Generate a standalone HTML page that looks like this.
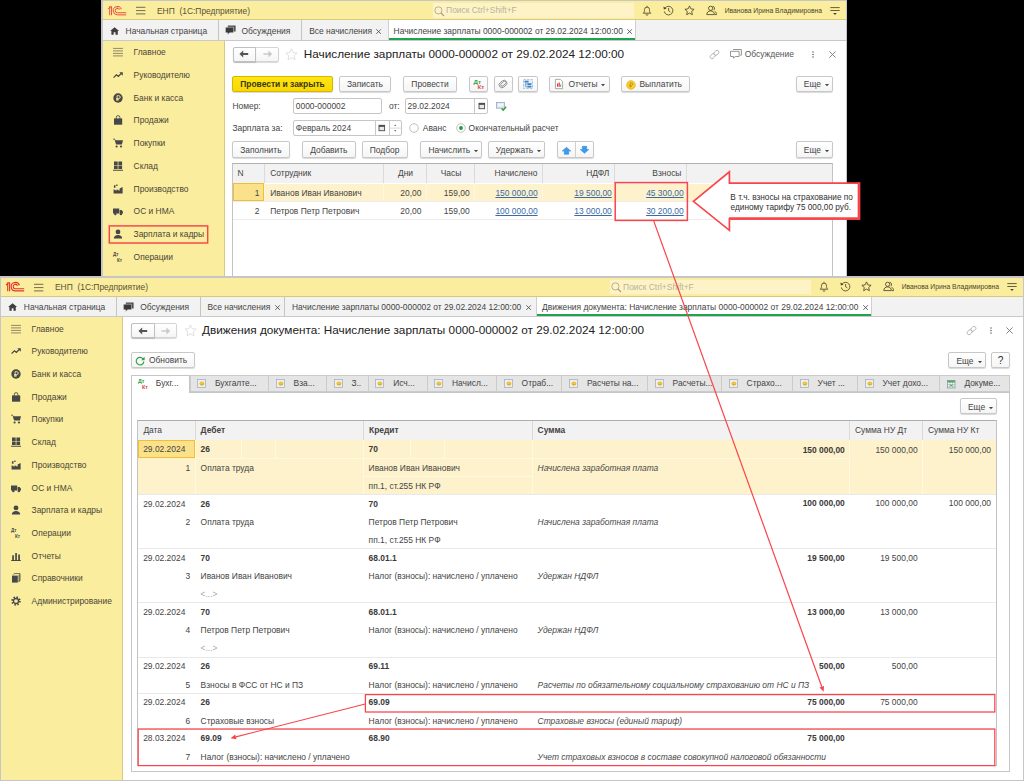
<!DOCTYPE html>
<html><head><meta charset="utf-8"><title>1C</title><style>
html,body{margin:0;padding:0;background:#000;}
body{width:1024px;height:781px;position:relative;overflow:hidden;font-family:"Liberation Sans",sans-serif;font-size:8.43px;color:#444;}
.a{position:absolute;}
.t{position:absolute;white-space:pre;line-height:12px;height:12px;}
.btn{box-sizing:border-box;border:1px solid #c8c8c8;border-radius:2px;background:linear-gradient(#ffffff,#f5f5f5);box-shadow:0 1px 1px rgba(0,0,0,0.15);}
.ybtn{background:linear-gradient(#ffe614,#f9d802);border-color:#d8b600;}
.inp{box-sizing:border-box;border:1px solid #c6c6c6;border-radius:2px;background:#fff;}
svg{overflow:visible;}
</style></head><body>
<div class="a" style="left:101.10px;top:-0.30px;width:746.10px;height:290.30px;background:#c6c6c8;"></div><div class="a" style="left:102.80px;top:1.20px;width:743.00px;height:287.40px;background:#fff;"></div><div class="a" style="left:102.80px;top:1.20px;width:743.00px;height:19.20px;background:#fbed9e;border-bottom:1px solid #d9c97e;box-sizing:border-box;"></div><svg class="a" style="left:108.00px;top:5.75px" width="18.5" height="9.6" viewBox="0 0 18.5 9.6"><path d="M0.1 3.1L1.6 1.3M1.7 0.6V9.25M3.55 0.6V9.25M1.3 0.95H3.95" stroke="#e2362f" stroke-width="0.85" fill="none"/><path d="M13.35 3.2A4.2 4.2 0 1 0 9.4 8.85H18.2" stroke="#e2362f" stroke-width="0.85" fill="none"/><path d="M11.4 3.9A2.15 2.15 0 1 0 9.4 6.75H18.2" stroke="#e2362f" stroke-width="0.85" fill="none"/><path d="M12.3 3.5A3.15 3.15 0 0 0 7.4 2.2" stroke="#e2362f" stroke-width="0.5" fill="none" opacity="0.7"/></svg><svg class="a" style="left:136.20px;top:6.20px" width="10" height="10" viewBox="0 0 10 10"><path d="M0 1.3h9.4M0 4.6h9.4M0 7.9h9.4" stroke="#6d6548" stroke-width="0.95"/></svg><span class="t" style="top:5.00px;left:157.00px;color:#5a5236;">ЕНП  (1С:Предприятие)</span><div class="a" style="left:432.70px;top:3.20px;width:201.30px;height:14.80px;background:#fdf3c6;"></div><svg class="a" style="left:434.30px;top:5.60px" width="11" height="11" viewBox="0 0 11 11"><circle cx="4.4" cy="4.4" r="3.6" fill="none" stroke="#a79f80" stroke-width="0.8"/><path d="M7 7l3 3" stroke="#a79f80" stroke-width="1.1"/></svg><span class="t" style="top:4.20px;left:446.10px;color:#b9b397;">Поиск Ctrl+Shift+F</span><svg class="a" style="left:641.90px;top:5.00px" width="10" height="11" viewBox="0 0 10 11"><path d="M1.2 8.2c1.2-0.9 1.3-2 1.3-3.6a2.5 2.5 0 0 1 5 0c0 1.6 0.1 2.7 1.3 3.6z" fill="none" stroke="#4b442c" stroke-width="0.85" stroke-linejoin="round"/><path d="M4 9.3a1 1 0 0 0 2 0" fill="none" stroke="#4b442c" stroke-width="0.8"/><path d="M5 0.8v1.2" stroke="#4b442c" stroke-width="0.8"/></svg><svg class="a" style="left:663.20px;top:5.00px" width="11" height="11" viewBox="0 0 11 11"><path d="M2 3.2A4.3 4.3 0 1 1 1.3 6.4" fill="none" stroke="#4b442c" stroke-width="0.85"/><path d="M0.4 1.6l0.5 2.9 2.7-0.9z" fill="#4b442c"/><path d="M5.6 3v2.7l1.8 1.2" fill="none" stroke="#4b442c" stroke-width="0.85"/></svg><svg class="a" style="left:684.40px;top:5.00px" width="11" height="11" viewBox="0 0 11 11"><path d="M5.5 0.9l1.4 3 3.2 0.4-2.4 2.2 0.65 3.2L5.5 8.1 2.65 9.7l0.65-3.2L0.9 4.3l3.2-0.4z" fill="none" stroke="#4b442c" stroke-width="0.85" stroke-linejoin="round"/></svg><svg class="a" style="left:705.70px;top:5.00px" width="11" height="11" viewBox="0 0 11 11"><circle cx="4.6" cy="3.3" r="2.1" fill="none" stroke="#4b442c" stroke-width="0.85"/><path d="M0.8 9.6c0-2.4 1.6-3.7 3.8-3.7s3.8 1.3 3.8 3.7z" fill="none" stroke="#4b442c" stroke-width="0.85"/><path d="M6.6 1.3a2.1 2.1 0 0 1 0.9 3.9M8.6 6.2c1.2 0.5 1.9 1.6 1.9 3.4H9" fill="none" stroke="#4b442c" stroke-width="0.85"/></svg><span class="t" style="top:4.70px;left:822.00px;transform:translateX(-100%);font-size:6.75px;color:#4b442c;">Иванова Ирина Владимировна</span><svg class="a" style="left:829.90px;top:5.50px" width="10" height="10" viewBox="0 0 10 10"><path d="M0.3 1.6h9.4M0.3 4.5h9.4" stroke="#4b442c" stroke-width="0.85"/><path d="M3.2 7h3.6L5 9z" fill="#4b442c"/></svg><div class="a" style="left:102.80px;top:20.40px;width:743.00px;height:20.20px;background:#f2f2f2;border-bottom:1px solid #c9c9c9;box-sizing:border-box;"></div><div class="a" style="left:217.80px;top:20.40px;width:1.00px;height:19.60px;background:#c4c4c4;"></div><span class="t" style="top:24.80px;left:125.60px;">Начальная страница</span><svg class="a" style="left:109.80px;top:27.00px" width="9.2" height="7.8" viewBox="0 0 9.2 7.8"><path d="M4.6 0.2L0.1 4.1h1.3V7.7h2.3V5.2h1.8V7.7h2.3V4.1h1.3z" fill="#3e3e3e"/></svg><div class="a" style="left:300.90px;top:20.40px;width:1.00px;height:19.60px;background:#c4c4c4;"></div><span class="t" style="top:24.80px;left:241.40px;">Обсуждения</span><svg class="a" style="left:225.10px;top:25.20px" width="11" height="10" viewBox="0 0 11 10"><path d="M2.8 0.5h7.8v6H2.8z" fill="#4d4d4d"/><path d="M0.4 2.2h8.2v5.6H4.6L2.6 9.8V7.8H0.4z" fill="#3a3a3a" stroke="#f2f2f2" stroke-width="0.5"/></svg><span class="t" style="top:24.80px;left:309.20px;">Все начисления</span><svg class="a" style="left:376.20px;top:28.50px" width="5.2" height="5.2" viewBox="0 0 5.2 5.2"><path d="M0.3 0.3l4.6 4.6M4.9 0.3L0.3 4.9" stroke="#4a4a4a" stroke-width="0.85"/></svg><div class="a" style="left:387.60px;top:20.40px;width:248.20px;height:19.30px;background:#fff;border-left:1px solid #cfcfcf;border-right:1px solid #cfcfcf;box-sizing:border-box;"></div><div class="a" style="left:388.60px;top:37.50px;width:246.20px;height:2.00px;background:#1fa350;"></div><span class="t" style="top:24.80px;left:393.60px;">Начисление зарплаты 0000-000002 от 29.02.2024 12:00:00</span><svg class="a" style="left:627.20px;top:28.50px" width="5.2" height="5.2" viewBox="0 0 5.2 5.2"><path d="M0.3 0.3l4.6 4.6M4.9 0.3L0.3 4.9" stroke="#4a4a4a" stroke-width="0.85"/></svg><div class="a" style="left:102.80px;top:40.60px;width:122.00px;height:248.00px;background:#fbed9e;border-right:1px solid #d8c880;box-sizing:border-box;"></div><svg class="a" style="left:113.30px;top:47.20px" width="10" height="10" viewBox="0 0 10 10"><path d="M0 1.4h10M0 3.9h10M0 6.4h10M0 8.9h10" stroke="#6f6852" stroke-width="0.75"/></svg><span class="t" style="top:46.20px;left:133.60px;color:#4a4636;">Главное</span><svg class="a" style="left:113.30px;top:69.92px" width="10" height="10" viewBox="0 0 10 10"><path d="M0.6 7.6L3.4 4.8L5.4 6.3L8.4 3.4" stroke="#474747" stroke-width="1.3" fill="none"/><path d="M6.3 2.2h3.5v3.5z" fill="#474747"/></svg><span class="t" style="top:68.92px;left:133.60px;color:#4a4636;">Руководителю</span><svg class="a" style="left:113.30px;top:92.64px" width="10" height="10" viewBox="0 0 10 10"><circle cx="5" cy="5" r="4.7" fill="#474747"/><path d="M4.1 7.9V2.7h1.7a1.45 1.45 0 0 1 0 2.9H3.1M3.1 6.8h2.9" stroke="#fbed9e" stroke-width="0.9" fill="none"/></svg><span class="t" style="top:91.64px;left:133.60px;color:#4a4636;">Банк и касса</span><svg class="a" style="left:113.30px;top:115.36px" width="10" height="10" viewBox="0 0 10 10"><path d="M1 3.4h8.2v6.3H1z" fill="#474747"/><path d="M3.3 4V2.4a1.8 1.8 0 0 1 3.6 0V4" stroke="#474747" fill="none" stroke-width="0.9"/></svg><span class="t" style="top:114.36px;left:133.60px;color:#4a4636;">Продажи</span><svg class="a" style="left:113.30px;top:138.08px" width="10" height="10" viewBox="0 0 10 10"><path d="M0 0.8h1.9l.5 1.4H10L8.9 6.6H3.1L1.5 1.6H0z" fill="#474747"/><circle cx="3.6" cy="8.5" r="1.1" fill="#474747"/><circle cx="8" cy="8.5" r="1.1" fill="#474747"/></svg><span class="t" style="top:137.08px;left:133.60px;color:#4a4636;">Покупки</span><svg class="a" style="left:113.30px;top:160.80px" width="10" height="10" viewBox="0 0 10 10"><path d="M1 0.6h3.7v3.3H1zM5.4 0.6h3.7v3.3H5.4zM1 4.6h3.7v3.3H1zM5.4 4.6h3.7v3.3H5.4zM0 8.7h10v1H0z" fill="#474747"/></svg><span class="t" style="top:159.80px;left:133.60px;color:#4a4636;">Склад</span><svg class="a" style="left:113.30px;top:183.52px" width="10" height="10" viewBox="0 0 10 10"><path d="M0.6 9.6V5.2l3 1.6V5.2l3 1.6V4.6l3-1.6v6.6z" fill="#474747"/><path d="M0.9 1.2h1.6v2.6H0.9zM3.2 0.4h1.3v1.6H3.2z" fill="#474747"/></svg><span class="t" style="top:182.52px;left:133.60px;color:#4a4636;">Производство</span><svg class="a" style="left:113.30px;top:206.24px" width="10" height="10" viewBox="0 0 10 10"><path d="M0 2.4h6.2v5.2H0zM6.7 3.9h1.9l1.4 1.8v1.9H6.7z" fill="#474747"/><circle cx="2.3" cy="8" r="1.25" fill="#474747"/><circle cx="7.9" cy="8" r="1.25" fill="#474747"/></svg><span class="t" style="top:205.24px;left:133.60px;color:#4a4636;">ОС и НМА</span><svg class="a" style="left:113.30px;top:228.96px" width="10" height="10" viewBox="0 0 10 10"><circle cx="5" cy="2.9" r="2.4" fill="#474747"/><path d="M0.8 9.6c0-2.6 1.8-3.7 4.2-3.7s4.2 1.1 4.2 3.7z" fill="#474747"/></svg><span class="t" style="top:227.96px;left:133.60px;color:#4a4636;">Зарплата и кадры</span><svg class="a" style="left:113.30px;top:251.68px" width="10" height="10" viewBox="0 0 10 10"><text x="0" y="4.2" font-family="Liberation Sans" font-size="4.6" font-weight="700" fill="#474747">Дт</text><text x="4" y="9.6" font-family="Liberation Sans" font-size="4.6" font-weight="700" fill="#474747">Кт</text></svg><span class="t" style="top:250.68px;left:133.60px;color:#4a4636;">Операции</span><svg class="a" style="left:113.30px;top:274.40px" width="10" height="10" viewBox="0 0 10 10"><path d="M1.2 9V4.2h1.7V9zM4.2 9V2h1.7v7zM7.2 9V3.4h1.7V9zM0.2 9h9.6v.9H0.2z" fill="#474747"/></svg><span class="t" style="top:273.40px;left:133.60px;color:#4a4636;">Отчеты</span><div class="a btn" style="left:232.60px;top:46.70px;width:46.20px;height:14.90px;border-color:#d4d4d4;"></div><div class="a btn" style="left:232.60px;top:46.70px;width:23.30px;height:14.90px;border-radius:2px 0 0 2px;border-color:#c0c0c0;"></div><svg class="a" style="left:239.40px;top:50.10px" width="10" height="8" viewBox="0 0 10 8"><path d="M0.4 4L4.2 0.6V3.1H9.2V4.9H4.2V7.4z" fill="#555"/></svg><svg class="a" style="left:262.50px;top:50.10px" width="10" height="8" viewBox="0 0 10 8"><path d="M9.2 4L5.4 0.6V3.2H0.4V4.8H5.4V7.4z" fill="#c9c9c9"/></svg><svg class="a" style="left:285.40px;top:47.90px" width="13" height="13" viewBox="0 0 13 13"><path d="M6.5 0.9l1.7 3.7 3.9 0.5-2.9 2.7 0.8 3.9L6.5 9.8 3 11.7l0.8-3.9L0.9 5.1l3.9-0.5z" fill="#fff" stroke="#dcdcdc" stroke-width="0.9" stroke-linejoin="round"/></svg><span class="t" style="top:48.20px;left:303.80px;font-size:11.78px;color:#222;line-height:14px;margin-top:-1px;">Начисление зарплаты 0000-000002 от 29.02.2024 12:00:00</span><svg class="a" style="left:709.00px;top:48.90px" width="11" height="11" viewBox="0 0 11 11"><g transform="rotate(-42 5.5 5.5)" fill="none" stroke="#a6a6a6" stroke-width="0.75"><rect x="0.2" y="3.6" width="5.6" height="3.8" rx="1.9"/><rect x="5.2" y="3.6" width="5.6" height="3.8" rx="1.9"/></g></svg><svg class="a" style="left:730.20px;top:49.40px" width="12" height="10" viewBox="0 0 12 10"><path d="M3 0.5h8.4v5.6H10" fill="none" stroke="#7c7c7c" stroke-width="0.8"/><path d="M0.5 2.3h8.6v5.2H5.2L3.6 9.3V7.5H0.5z" fill="#fff" stroke="#7c7c7c" stroke-width="0.8"/></svg><span class="t" style="top:48.20px;left:744.80px;color:#555;">Обсуждение</span><svg class="a" style="left:812.30px;top:50.80px" width="2" height="7" viewBox="0 0 2 7"><circle cx="1" cy="1" r="0.68" fill="#4a4a4a"/><circle cx="1" cy="3.5" r="0.68" fill="#4a4a4a"/><circle cx="1" cy="6" r="0.68" fill="#4a4a4a"/></svg><svg class="a" style="left:828.70px;top:50.80px" width="7" height="7" viewBox="0 0 7 7"><path d="M0.4 0.4l6.2 6.2M6.6 0.4L0.4 6.6" stroke="#707070" stroke-width="0.85"/></svg><div class="a btn ybtn" style="left:232.20px;top:75.80px;width:100.60px;height:16.20px;"></div><span class="t" style="top:78.10px;left:282.50px;transform:translateX(-50%);color:#3b3612;font-weight:700;">Провести и закрыть</span><div class="a btn " style="left:339.00px;top:75.80px;width:51.80px;height:16.20px;"></div><span class="t" style="top:78.10px;left:364.90px;transform:translateX(-50%);">Записать</span><div class="a btn " style="left:403.20px;top:75.80px;width:53.60px;height:16.20px;"></div><span class="t" style="top:78.10px;left:430.00px;transform:translateX(-50%);">Провести</span><div class="a btn " style="left:469.30px;top:75.80px;width:18.90px;height:16.20px;"></div><span class="t" style="top:75.90px;left:473.60px;font-size:6.2px;color:#2f9e44;font-weight:700;">Дт</span><span class="t" style="top:81.20px;left:477.40px;font-size:6.2px;color:#e8474b;font-weight:700;">Кт</span><div class="a btn " style="left:494.00px;top:75.80px;width:18.80px;height:16.20px;"></div><svg class="a" style="left:498.40px;top:79.20px" width="10" height="10" viewBox="0 0 10 10"><g transform="rotate(-40 5 5)" fill="none" stroke="#8c8c8c" stroke-width="0.9"><rect x="0.8" y="2.2" width="8.4" height="5.6" rx="2.8"/><rect x="2.4" y="3.6" width="6.2" height="2.8" rx="1.4"/></g></svg><div class="a btn " style="left:518.40px;top:75.80px;width:19.30px;height:16.20px;"></div><svg class="a" style="left:523.20px;top:79.00px" width="10" height="10" viewBox="0 0 10 10"><rect x="0.5" y="0.6" width="9" height="8.8" fill="#e6f0fa" stroke="#5b8cc4" stroke-width="0.5" stroke-dasharray="2.4 1.2"/><path d="M1.6 1.8h4v1.8h-4zM4.4 4.2h4V6h-4zM4.4 6.8h4v1.8h-4z" fill="#3f7dc0"/><path d="M2.6 3.6v4.1h1.8M2.6 5.1h1.8" fill="none" stroke="#3f7dc0" stroke-width="0.6"/></svg><div class="a btn " style="left:549.30px;top:75.80px;width:60.30px;height:16.20px;"></div><svg class="a" style="left:555.40px;top:79.20px" width="8" height="10" viewBox="0 0 8 10"><path d="M0.4 0.4h5l2.2 2.2v7H0.4z" fill="#fff" stroke="#8a8a8a" stroke-width="0.7"/><path d="M2 7.8V4.6h1.2v3.2z" fill="#e03b3b"/><path d="M3.6 7.8V3.4h1.2v4.4z" fill="#e03b3b"/><path d="M5.2 7.8V5.4h1v2.4z" fill="#39a845"/></svg><span class="t" style="top:78.10px;left:568.40px;">Отчеты</span><svg class="a" style="left:601.20px;top:84.20px" width="4" height="2.4" viewBox="0 0 4 2.4"><path d="M0 0h4L2 2.3z" fill="#444"/></svg><div class="a btn " style="left:621.30px;top:75.80px;width:68.70px;height:16.20px;"></div><svg class="a" style="left:625.90px;top:79.70px" width="10" height="10" viewBox="0 0 10 10"><circle cx="5" cy="5" r="4.3" fill="#f9cf2e" stroke="#e0ad18" stroke-width="0.7"/><path d="M4.2 7.6V2.8h1.3a1.2 1.2 0 0 1 0 2.4H3.4M3.4 6.4h2.4" stroke="#b8860b" stroke-width="0.7" fill="none"/></svg><span class="t" style="top:78.10px;left:639.50px;">Выплатить</span><div class="a btn " style="left:795.80px;top:75.80px;width:37.00px;height:16.20px;"></div><span class="t" style="top:78.10px;left:803.80px;">Еще</span><svg class="a" style="left:824.80px;top:84.20px" width="4" height="2.4" viewBox="0 0 4 2.4"><path d="M0 0h4L2 2.3z" fill="#444"/></svg><span class="t" style="top:100.20px;left:232.40px;">Номер:</span><div class="a inp" style="left:293.40px;top:98.30px;width:89.00px;height:15.50px;"></div><span class="t" style="top:100.20px;left:295.80px;">0000-000002</span><span class="t" style="top:100.20px;left:389.00px;">от:</span><div class="a inp" style="left:405.20px;top:98.30px;width:83.10px;height:15.50px;"></div><span class="t" style="top:100.20px;left:407.60px;">29.02.2024</span><div class="a" style="left:474.40px;top:99.40px;width:0.80px;height:13.40px;background:#c8c8c8;"></div><svg class="a" style="left:477.80px;top:102.30px" width="8" height="8" viewBox="0 0 8 8"><rect x="1" y="1.3" width="5.6" height="5.4" fill="#e8e8e8" stroke="#4c4c4c" stroke-width="0.9"/><path d="M1 1.2h5.6v1.6H1z" fill="#444"/></svg><svg class="a" style="left:496.20px;top:102.00px" width="11" height="9" viewBox="0 0 11 9"><rect x="0.4" y="0.4" width="8.2" height="5.8" fill="#dfe7f0" stroke="#8aa0b8" stroke-width="0.7"/><path d="M1.8 2.2h5.4M1.8 3.8h5.4" stroke="#fff" stroke-width="0.8"/><path d="M5.6 6.4l1.6 1.7 3-3.3" fill="none" stroke="#2fa23c" stroke-width="1.4"/></svg><span class="t" style="top:121.80px;left:232.40px;">Зарплата за:</span><div class="a inp" style="left:293.40px;top:120.20px;width:109.00px;height:15.70px;"></div><span class="t" style="top:121.80px;left:295.80px;">Февраль 2024</span><div class="a" style="left:375.40px;top:120.90px;width:0.80px;height:14.30px;background:#c8c8c8;"></div><div class="a" style="left:388.60px;top:120.90px;width:0.80px;height:14.30px;background:#c8c8c8;"></div><svg class="a" style="left:378.40px;top:123.80px" width="8" height="8" viewBox="0 0 8 8"><rect x="1" y="1.3" width="5.6" height="5.4" fill="#e8e8e8" stroke="#4c4c4c" stroke-width="0.9"/><path d="M1 1.2h5.6v1.6H1z" fill="#444"/></svg><svg class="a" style="left:389.40px;top:122.90px" width="12" height="10" viewBox="0 0 12 10"><path d="M5 3.1h2.4L6.2 1.5z" fill="#777"/><path d="M0.2 5.1h11.8" stroke="#cfcfcf" stroke-width="0.8"/><path d="M5 7.1h2.4L6.2 8.7z" fill="#777"/></svg><svg class="a" style="left:409.20px;top:122.80px" width="10" height="10" viewBox="0 0 10 10"><circle cx="5" cy="5" r="4.3" fill="#fff" stroke="#b3b3b3" stroke-width="0.8"/></svg><span class="t" style="top:121.60px;left:422.80px;">Аванс</span><svg class="a" style="left:455.60px;top:122.80px" width="10" height="10" viewBox="0 0 10 10"><circle cx="5" cy="5" r="4.3" fill="#fff" stroke="#b3b3b3" stroke-width="0.8"/><circle cx="5" cy="5" r="1.9" fill="#18964a"/></svg><span class="t" style="top:121.80px;left:468.60px;">Окончательный расчет</span><div class="a btn " style="left:232.20px;top:141.40px;width:57.40px;height:16.20px;"></div><span class="t" style="top:143.70px;left:260.90px;transform:translateX(-50%);">Заполнить</span><div class="a btn " style="left:302.20px;top:141.40px;width:53.40px;height:16.20px;"></div><span class="t" style="top:143.70px;left:328.90px;transform:translateX(-50%);">Добавить</span><div class="a btn " style="left:361.60px;top:141.40px;width:46.00px;height:16.20px;"></div><span class="t" style="top:143.70px;left:384.60px;transform:translateX(-50%);">Подбор</span><div class="a btn " style="left:420.40px;top:141.40px;width:61.20px;height:16.20px;"></div><span class="t" style="top:143.70px;left:428.40px;">Начислить</span><svg class="a" style="left:473.80px;top:149.90px" width="4" height="2.4" viewBox="0 0 4 2.4"><path d="M0 0h4L2 2.3z" fill="#444"/></svg><div class="a btn " style="left:488.00px;top:141.40px;width:56.60px;height:16.20px;"></div><span class="t" style="top:143.70px;left:495.80px;">Удержать</span><svg class="a" style="left:537.00px;top:149.90px" width="4" height="2.4" viewBox="0 0 4 2.4"><path d="M0 0h4L2 2.3z" fill="#444"/></svg><div class="a btn " style="left:557.20px;top:141.40px;width:37.20px;height:16.20px;"></div><div class="a" style="left:575.40px;top:142.00px;width:0.80px;height:14.80px;background:#cfcfcf;"></div><svg class="a" style="left:561.80px;top:146.50px" width="9" height="7.6" viewBox="0 0 9 7.6"><path d="M4.5 0.3L8.8 4.1H6.7V7.3H2.3V4.1H0.2z" fill="#3a9cf0" stroke="#2a82d8" stroke-width="0.5"/></svg><svg class="a" style="left:580.00px;top:146.10px" width="9" height="7.6" viewBox="0 0 9 7.6"><path d="M4.5 7.3L8.8 3.5H6.7V0.3H2.3V3.5H0.2z" fill="#3a9cf0" stroke="#2a82d8" stroke-width="0.5"/></svg><div class="a btn " style="left:795.80px;top:141.40px;width:37.00px;height:16.20px;"></div><span class="t" style="top:143.70px;left:803.80px;">Еще</span><svg class="a" style="left:824.80px;top:149.90px" width="4" height="2.4" viewBox="0 0 4 2.4"><path d="M0 0h4L2 2.3z" fill="#444"/></svg><div class="a" style="left:232.20px;top:163.20px;width:600.60px;height:128.80px;border:1px solid #c3c3c3;border-top-color:#b0b0b0;box-sizing:border-box;background:#fff;"></div><div class="a" style="left:233.20px;top:164.20px;width:598.60px;height:19.00px;background:#f2f2f2;"></div><div class="a" style="left:263.60px;top:164.20px;width:0.80px;height:19.00px;background:#dadada;"></div><div class="a" style="left:382.80px;top:164.20px;width:0.80px;height:19.00px;background:#dadada;"></div><div class="a" style="left:425.60px;top:164.20px;width:0.80px;height:19.00px;background:#dadada;"></div><div class="a" style="left:473.80px;top:164.20px;width:0.80px;height:19.00px;background:#dadada;"></div><div class="a" style="left:542.00px;top:164.20px;width:0.80px;height:19.00px;background:#dadada;"></div><div class="a" style="left:614.00px;top:164.20px;width:0.80px;height:19.00px;background:#dadada;"></div><div class="a" style="left:686.00px;top:164.20px;width:0.80px;height:19.00px;background:#dadada;"></div><div class="a" style="left:233.20px;top:183.60px;width:598.60px;height:17.60px;background:#fdf2cb;"></div><div class="a" style="left:263.60px;top:183.40px;width:0.80px;height:17.80px;background:#fff8dc;"></div><div class="a" style="left:382.80px;top:183.40px;width:0.80px;height:17.80px;background:#fff8dc;"></div><div class="a" style="left:425.60px;top:183.40px;width:0.80px;height:17.80px;background:#fff8dc;"></div><div class="a" style="left:473.80px;top:183.40px;width:0.80px;height:17.80px;background:#fff8dc;"></div><div class="a" style="left:542.00px;top:183.40px;width:0.80px;height:17.80px;background:#fff8dc;"></div><div class="a" style="left:614.00px;top:183.40px;width:0.80px;height:17.80px;background:#fff8dc;"></div><div class="a" style="left:686.00px;top:183.40px;width:0.80px;height:17.80px;background:#fff8dc;"></div><div class="a" style="left:233.20px;top:201.20px;width:598.60px;height:0.80px;background:#ececec;"></div><div class="a" style="left:233.20px;top:219.20px;width:598.60px;height:0.80px;background:#ececec;"></div><div class="a" style="left:233.20px;top:183.40px;width:30.80px;height:18.00px;background:#fbe28a;border:1px solid #efbf38;box-sizing:border-box;"></div><span class="t" style="top:167.40px;left:237.60px;">N</span><span class="t" style="top:167.40px;left:270.20px;">Сотрудник</span><span class="t" style="top:167.40px;left:413.00px;transform:translateX(-100%);">Дни</span><span class="t" style="top:167.40px;left:461.20px;transform:translateX(-100%);">Часы</span><span class="t" style="top:167.40px;left:537.40px;transform:translateX(-100%);">Начислено</span><span class="t" style="top:167.40px;left:609.40px;transform:translateX(-100%);">НДФЛ</span><span class="t" style="top:167.40px;left:681.40px;transform:translateX(-100%);">Взносы</span><span class="t" style="top:186.60px;left:259.40px;transform:translateX(-100%);">1</span><span class="t" style="top:186.60px;left:270.20px;">Иванов Иван Иванович</span><span class="t" style="top:186.60px;left:421.40px;transform:translateX(-100%);">20,00</span><span class="t" style="top:186.60px;left:469.60px;transform:translateX(-100%);">159,00</span><span class="t" style="top:186.60px;left:537.60px;transform:translateX(-100%);color:#3a6aa8;text-decoration:underline;">150 000,00</span><span class="t" style="top:186.60px;left:611.80px;transform:translateX(-100%);color:#3a6aa8;text-decoration:underline;">19 500,00</span><span class="t" style="top:186.60px;left:683.60px;transform:translateX(-100%);color:#3a6aa8;text-decoration:underline;">45 300,00</span><span class="t" style="top:205.00px;left:259.40px;transform:translateX(-100%);">2</span><span class="t" style="top:205.00px;left:270.20px;">Петров Петр Петрович</span><span class="t" style="top:205.00px;left:421.40px;transform:translateX(-100%);">20,00</span><span class="t" style="top:205.00px;left:469.60px;transform:translateX(-100%);">159,00</span><span class="t" style="top:205.00px;left:537.60px;transform:translateX(-100%);color:#3a6aa8;text-decoration:underline;">100 000,00</span><span class="t" style="top:205.00px;left:611.80px;transform:translateX(-100%);color:#3a6aa8;text-decoration:underline;">13 000,00</span><span class="t" style="top:205.00px;left:683.60px;transform:translateX(-100%);color:#3a6aa8;text-decoration:underline;">30 200,00</span>
<div class="a" style="left:-0.90px;top:276.00px;width:1025.10px;height:505.20px;background:#c6c6c8;"></div><div class="a" style="left:0.80px;top:277.50px;width:1022.00px;height:502.30px;background:#fff;"></div><div class="a" style="left:0.80px;top:277.50px;width:1022.00px;height:19.20px;background:#fbed9e;border-bottom:1px solid #d9c97e;box-sizing:border-box;"></div><svg class="a" style="left:6.00px;top:282.05px" width="18.5" height="9.6" viewBox="0 0 18.5 9.6"><path d="M0.1 3.1L1.6 1.3M1.7 0.6V9.25M3.55 0.6V9.25M1.3 0.95H3.95" stroke="#e2362f" stroke-width="1.15" fill="none"/><path d="M13.35 3.2A4.2 4.2 0 1 0 9.4 8.85H18.2" stroke="#e2362f" stroke-width="1.15" fill="none"/><path d="M11.4 3.9A2.15 2.15 0 1 0 9.4 6.75H18.2" stroke="#e2362f" stroke-width="1.15" fill="none"/><path d="M12.3 3.5A3.15 3.15 0 0 0 7.4 2.2" stroke="#e2362f" stroke-width="0.5" fill="none" opacity="0.7"/></svg><svg class="a" style="left:34.20px;top:282.50px" width="10" height="10" viewBox="0 0 10 10"><path d="M0 1.3h9.4M0 4.6h9.4M0 7.9h9.4" stroke="#6d6548" stroke-width="0.95"/></svg><span class="t" style="top:281.30px;left:55.00px;color:#5a5236;">ЕНП  (1С:Предприятие)</span><div class="a" style="left:609.70px;top:279.50px;width:201.30px;height:14.80px;background:#fdf3c6;"></div><svg class="a" style="left:611.30px;top:281.90px" width="11" height="11" viewBox="0 0 11 11"><circle cx="4.4" cy="4.4" r="3.6" fill="none" stroke="#a79f80" stroke-width="0.8"/><path d="M7 7l3 3" stroke="#a79f80" stroke-width="1.1"/></svg><span class="t" style="top:280.50px;left:623.10px;color:#b9b397;">Поиск Ctrl+Shift+F</span><svg class="a" style="left:818.90px;top:281.30px" width="10" height="11" viewBox="0 0 10 11"><path d="M1.2 8.2c1.2-0.9 1.3-2 1.3-3.6a2.5 2.5 0 0 1 5 0c0 1.6 0.1 2.7 1.3 3.6z" fill="none" stroke="#4b442c" stroke-width="0.85" stroke-linejoin="round"/><path d="M4 9.3a1 1 0 0 0 2 0" fill="none" stroke="#4b442c" stroke-width="0.8"/><path d="M5 0.8v1.2" stroke="#4b442c" stroke-width="0.8"/></svg><svg class="a" style="left:840.20px;top:281.30px" width="11" height="11" viewBox="0 0 11 11"><path d="M2 3.2A4.3 4.3 0 1 1 1.3 6.4" fill="none" stroke="#4b442c" stroke-width="0.85"/><path d="M0.4 1.6l0.5 2.9 2.7-0.9z" fill="#4b442c"/><path d="M5.6 3v2.7l1.8 1.2" fill="none" stroke="#4b442c" stroke-width="0.85"/></svg><svg class="a" style="left:861.40px;top:281.30px" width="11" height="11" viewBox="0 0 11 11"><path d="M5.5 0.9l1.4 3 3.2 0.4-2.4 2.2 0.65 3.2L5.5 8.1 2.65 9.7l0.65-3.2L0.9 4.3l3.2-0.4z" fill="none" stroke="#4b442c" stroke-width="0.85" stroke-linejoin="round"/></svg><svg class="a" style="left:882.70px;top:281.30px" width="11" height="11" viewBox="0 0 11 11"><circle cx="4.6" cy="3.3" r="2.1" fill="none" stroke="#4b442c" stroke-width="0.85"/><path d="M0.8 9.6c0-2.4 1.6-3.7 3.8-3.7s3.8 1.3 3.8 3.7z" fill="none" stroke="#4b442c" stroke-width="0.85"/><path d="M6.6 1.3a2.1 2.1 0 0 1 0.9 3.9M8.6 6.2c1.2 0.5 1.9 1.6 1.9 3.4H9" fill="none" stroke="#4b442c" stroke-width="0.85"/></svg><span class="t" style="top:281.00px;left:999.00px;transform:translateX(-100%);font-size:6.75px;color:#4b442c;">Иванова Ирина Владимировна</span><svg class="a" style="left:1006.90px;top:281.80px" width="10" height="10" viewBox="0 0 10 10"><path d="M0.3 1.6h9.4M0.3 4.5h9.4" stroke="#4b442c" stroke-width="0.85"/><path d="M3.2 7h3.6L5 9z" fill="#4b442c"/></svg><div class="a" style="left:0.80px;top:296.70px;width:1022.00px;height:20.20px;background:#f2f2f2;border-bottom:1px solid #c9c9c9;box-sizing:border-box;"></div><div class="a" style="left:116.10px;top:296.70px;width:1.00px;height:19.60px;background:#c4c4c4;"></div><span class="t" style="top:301.10px;left:23.80px;">Начальная страница</span><svg class="a" style="left:7.80px;top:303.30px" width="9.2" height="7.8" viewBox="0 0 9.2 7.8"><path d="M4.6 0.2L0.1 4.1h1.3V7.7h2.3V5.2h1.8V7.7h2.3V4.1h1.3z" fill="#3e3e3e"/></svg><div class="a" style="left:199.70px;top:296.70px;width:1.00px;height:19.60px;background:#c4c4c4;"></div><span class="t" style="top:301.10px;left:140.20px;">Обсуждения</span><svg class="a" style="left:123.40px;top:301.50px" width="11" height="10" viewBox="0 0 11 10"><path d="M2.8 0.5h7.8v6H2.8z" fill="#4d4d4d"/><path d="M0.4 2.2h8.2v5.6H4.6L2.6 9.8V7.8H0.4z" fill="#3a3a3a" stroke="#f2f2f2" stroke-width="0.5"/></svg><div class="a" style="left:283.90px;top:296.70px;width:1.00px;height:19.60px;background:#c4c4c4;"></div><span class="t" style="top:301.10px;left:207.40px;">Все начисления</span><svg class="a" style="left:275.00px;top:304.80px" width="5.2" height="5.2" viewBox="0 0 5.2 5.2"><path d="M0.3 0.3l4.6 4.6M4.9 0.3L0.3 4.9" stroke="#4a4a4a" stroke-width="0.85"/></svg><span class="t" style="top:301.10px;left:292.00px;">Начисление зарплаты 0000-000002 от 29.02.2024 12:00:00</span><svg class="a" style="left:525.60px;top:304.80px" width="5.2" height="5.2" viewBox="0 0 5.2 5.2"><path d="M0.3 0.3l4.6 4.6M4.9 0.3L0.3 4.9" stroke="#4a4a4a" stroke-width="0.85"/></svg><div class="a" style="left:535.60px;top:296.70px;width:336.20px;height:19.30px;background:#fff;border-left:1px solid #cfcfcf;border-right:1px solid #cfcfcf;box-sizing:border-box;"></div><div class="a" style="left:536.60px;top:313.80px;width:334.20px;height:2.00px;background:#1fa350;"></div><span class="t" style="top:301.10px;left:542.00px;">Движения документа: Начисление зарплаты 0000-000002 от 29.02.2024 12:00:00</span><svg class="a" style="left:862.60px;top:304.80px" width="5.2" height="5.2" viewBox="0 0 5.2 5.2"><path d="M0.3 0.3l4.6 4.6M4.9 0.3L0.3 4.9" stroke="#4a4a4a" stroke-width="0.85"/></svg><div class="a" style="left:0.80px;top:316.90px;width:122.00px;height:462.90px;background:#fbed9e;border-right:1px solid #d8c880;box-sizing:border-box;"></div><svg class="a" style="left:11.30px;top:323.50px" width="10" height="10" viewBox="0 0 10 10"><path d="M0 1.4h10M0 3.9h10M0 6.4h10M0 8.9h10" stroke="#6f6852" stroke-width="0.75"/></svg><span class="t" style="top:322.50px;left:31.60px;color:#4a4636;">Главное</span><svg class="a" style="left:11.30px;top:346.22px" width="10" height="10" viewBox="0 0 10 10"><path d="M0.6 7.6L3.4 4.8L5.4 6.3L8.4 3.4" stroke="#474747" stroke-width="1.3" fill="none"/><path d="M6.3 2.2h3.5v3.5z" fill="#474747"/></svg><span class="t" style="top:345.22px;left:31.60px;color:#4a4636;">Руководителю</span><svg class="a" style="left:11.30px;top:368.94px" width="10" height="10" viewBox="0 0 10 10"><circle cx="5" cy="5" r="4.7" fill="#474747"/><path d="M4.1 7.9V2.7h1.7a1.45 1.45 0 0 1 0 2.9H3.1M3.1 6.8h2.9" stroke="#fbed9e" stroke-width="0.9" fill="none"/></svg><span class="t" style="top:367.94px;left:31.60px;color:#4a4636;">Банк и касса</span><svg class="a" style="left:11.30px;top:391.66px" width="10" height="10" viewBox="0 0 10 10"><path d="M1 3.4h8.2v6.3H1z" fill="#474747"/><path d="M3.3 4V2.4a1.8 1.8 0 0 1 3.6 0V4" stroke="#474747" fill="none" stroke-width="0.9"/></svg><span class="t" style="top:390.66px;left:31.60px;color:#4a4636;">Продажи</span><svg class="a" style="left:11.30px;top:414.38px" width="10" height="10" viewBox="0 0 10 10"><path d="M0 0.8h1.9l.5 1.4H10L8.9 6.6H3.1L1.5 1.6H0z" fill="#474747"/><circle cx="3.6" cy="8.5" r="1.1" fill="#474747"/><circle cx="8" cy="8.5" r="1.1" fill="#474747"/></svg><span class="t" style="top:413.38px;left:31.60px;color:#4a4636;">Покупки</span><svg class="a" style="left:11.30px;top:437.10px" width="10" height="10" viewBox="0 0 10 10"><path d="M1 0.6h3.7v3.3H1zM5.4 0.6h3.7v3.3H5.4zM1 4.6h3.7v3.3H1zM5.4 4.6h3.7v3.3H5.4zM0 8.7h10v1H0z" fill="#474747"/></svg><span class="t" style="top:436.10px;left:31.60px;color:#4a4636;">Склад</span><svg class="a" style="left:11.30px;top:459.82px" width="10" height="10" viewBox="0 0 10 10"><path d="M0.6 9.6V5.2l3 1.6V5.2l3 1.6V4.6l3-1.6v6.6z" fill="#474747"/><path d="M0.9 1.2h1.6v2.6H0.9zM3.2 0.4h1.3v1.6H3.2z" fill="#474747"/></svg><span class="t" style="top:458.82px;left:31.60px;color:#4a4636;">Производство</span><svg class="a" style="left:11.30px;top:482.54px" width="10" height="10" viewBox="0 0 10 10"><path d="M0 2.4h6.2v5.2H0zM6.7 3.9h1.9l1.4 1.8v1.9H6.7z" fill="#474747"/><circle cx="2.3" cy="8" r="1.25" fill="#474747"/><circle cx="7.9" cy="8" r="1.25" fill="#474747"/></svg><span class="t" style="top:481.54px;left:31.60px;color:#4a4636;">ОС и НМА</span><svg class="a" style="left:11.30px;top:505.26px" width="10" height="10" viewBox="0 0 10 10"><circle cx="5" cy="2.9" r="2.4" fill="#474747"/><path d="M0.8 9.6c0-2.6 1.8-3.7 4.2-3.7s4.2 1.1 4.2 3.7z" fill="#474747"/></svg><span class="t" style="top:504.26px;left:31.60px;color:#4a4636;">Зарплата и кадры</span><svg class="a" style="left:11.30px;top:527.98px" width="10" height="10" viewBox="0 0 10 10"><text x="0" y="4.2" font-family="Liberation Sans" font-size="4.6" font-weight="700" fill="#474747">Дт</text><text x="4" y="9.6" font-family="Liberation Sans" font-size="4.6" font-weight="700" fill="#474747">Кт</text></svg><span class="t" style="top:526.98px;left:31.60px;color:#4a4636;">Операции</span><svg class="a" style="left:11.30px;top:550.70px" width="10" height="10" viewBox="0 0 10 10"><path d="M1.2 9V4.2h1.7V9zM4.2 9V2h1.7v7zM7.2 9V3.4h1.7V9zM0.2 9h9.6v.9H0.2z" fill="#474747"/></svg><span class="t" style="top:549.70px;left:31.60px;color:#4a4636;">Отчеты</span><svg class="a" style="left:11.30px;top:573.42px" width="10" height="10" viewBox="0 0 10 10"><path d="M1 2.6h5.8v7H1z" fill="#474747"/><path d="M2.2 1.6l1-1h5.8v7l-1.2 1.2" stroke="#474747" stroke-width="0.8" fill="none"/><path d="M7.6 2.6V9.2l1-1V1z" fill="#474747"/></svg><span class="t" style="top:572.42px;left:31.60px;color:#4a4636;">Справочники</span><svg class="a" style="left:11.30px;top:596.14px" width="10" height="10" viewBox="0 0 10 10"><circle cx="5" cy="5" r="3.7" fill="none" stroke="#474747" stroke-width="2" stroke-dasharray="1.45 1.456"/><circle cx="5" cy="5" r="2.5" fill="none" stroke="#474747" stroke-width="1.3"/></svg><span class="t" style="top:595.14px;left:31.60px;color:#4a4636;">Администрирование</span><div class="a btn" style="left:130.60px;top:323.20px;width:46.20px;height:14.90px;border-color:#d4d4d4;"></div><div class="a btn" style="left:130.60px;top:323.20px;width:24.60px;height:14.90px;border-radius:2px 0 0 2px;border-color:#c0c0c0;"></div><svg class="a" style="left:138.05px;top:326.60px" width="10" height="8" viewBox="0 0 10 8"><path d="M0.4 4L4.2 0.6V3.1H9.2V4.9H4.2V7.4z" fill="#555"/></svg><svg class="a" style="left:161.15px;top:326.60px" width="10" height="8" viewBox="0 0 10 8"><path d="M9.2 4L5.4 0.6V3.2H0.4V4.8H5.4V7.4z" fill="#c9c9c9"/></svg><svg class="a" style="left:184.00px;top:324.10px" width="13" height="13" viewBox="0 0 13 13"><path d="M6.5 0.9l1.7 3.7 3.9 0.5-2.9 2.7 0.8 3.9L6.5 9.8 3 11.7l0.8-3.9L0.9 5.1l3.9-0.5z" fill="#fff" stroke="#dcdcdc" stroke-width="0.9" stroke-linejoin="round"/></svg><span class="t" style="top:324.40px;left:202.00px;font-size:11.78px;color:#222;line-height:14px;margin-top:-1px;">Движения документа: Начисление зарплаты 0000-000002 от 29.02.2024 12:00:00</span><svg class="a" style="left:965.50px;top:324.90px" width="11" height="11" viewBox="0 0 11 11"><g transform="rotate(-42 5.5 5.5)" fill="none" stroke="#a6a6a6" stroke-width="0.75"><rect x="0.2" y="3.6" width="5.6" height="3.8" rx="1.9"/><rect x="5.2" y="3.6" width="5.6" height="3.8" rx="1.9"/></g></svg><svg class="a" style="left:989.50px;top:326.90px" width="2" height="7" viewBox="0 0 2 7"><circle cx="1" cy="1" r="0.68" fill="#4a4a4a"/><circle cx="1" cy="3.5" r="0.68" fill="#4a4a4a"/><circle cx="1" cy="6" r="0.68" fill="#4a4a4a"/></svg><svg class="a" style="left:1005.70px;top:326.90px" width="7" height="7" viewBox="0 0 7 7"><path d="M0.4 0.4l6.2 6.2M6.6 0.4L0.4 6.6" stroke="#707070" stroke-width="0.85"/></svg><div class="a btn " style="left:130.60px;top:352.40px;width:64.00px;height:16.00px;"></div><svg class="a" style="left:135.40px;top:355.60px" width="10" height="10" viewBox="0 0 10 10"><path d="M8.3 3.2A3.8 3.8 0 1 0 8.8 5.6" fill="none" stroke="#2c9f45" stroke-width="1.15"/><path d="M9.6 0.8v3.4H6.2z" fill="#2c9f45"/></svg><span class="t" style="top:354.20px;left:149.00px;">Обновить</span><div class="a btn " style="left:948.40px;top:352.30px;width:37.40px;height:16.20px;"></div><span class="t" style="top:354.60px;left:956.40px;">Еще</span><svg class="a" style="left:977.60px;top:361.00px" width="4" height="2.4" viewBox="0 0 4 2.4"><path d="M0 0h4L2 2.3z" fill="#444"/></svg><div class="a btn " style="left:991.00px;top:352.30px;width:18.60px;height:16.20px;"></div><span class="t" style="top:354.90px;left:1000.50px;transform:translateX(-50%);font-size:10.2px;color:#2e2e2e;">?</span><div class="a" style="left:130.60px;top:375.20px;width:879.20px;height:17.20px;background:#e5e5e5;border:1px solid #cbcbcb;box-sizing:border-box;"></div><div class="a" style="left:189.70px;top:376.20px;width:1.00px;height:15.20px;background:#cbcbcb;"></div><div class="a" style="left:267.90px;top:376.20px;width:1.00px;height:15.20px;background:#cbcbcb;"></div><div class="a" style="left:326.10px;top:376.20px;width:1.00px;height:15.20px;background:#cbcbcb;"></div><div class="a" style="left:367.50px;top:376.20px;width:1.00px;height:15.20px;background:#cbcbcb;"></div><div class="a" style="left:426.70px;top:376.20px;width:1.00px;height:15.20px;background:#cbcbcb;"></div><div class="a" style="left:495.90px;top:376.20px;width:1.00px;height:15.20px;background:#cbcbcb;"></div><div class="a" style="left:561.10px;top:376.20px;width:1.00px;height:15.20px;background:#cbcbcb;"></div><div class="a" style="left:647.10px;top:376.20px;width:1.00px;height:15.20px;background:#cbcbcb;"></div><div class="a" style="left:721.10px;top:376.20px;width:1.00px;height:15.20px;background:#cbcbcb;"></div><div class="a" style="left:791.90px;top:376.20px;width:1.00px;height:15.20px;background:#cbcbcb;"></div><div class="a" style="left:856.90px;top:376.20px;width:1.00px;height:15.20px;background:#cbcbcb;"></div><div class="a" style="left:939.10px;top:376.20px;width:1.00px;height:15.20px;background:#cbcbcb;"></div><div class="a" style="left:130.60px;top:391.80px;width:879.20px;height:380.20px;background:#fff;border:1px solid #c6c6c6;box-sizing:border-box;"></div><div class="a" style="left:130.60px;top:374.60px;width:59.80px;height:18.40px;background:#fff;border:1px solid #c6c6c6;border-bottom:none;border-radius:2px 2px 0 0;box-sizing:border-box;"></div><span class="t" style="top:375.40px;left:138.00px;font-size:5.4px;color:#2f9e44;font-weight:700;">Дт</span><span class="t" style="top:380.60px;left:142.00px;font-size:5.4px;color:#e0393e;font-weight:700;">Кт</span><span class="t" style="top:377.10px;left:155.80px;">Бухг...</span><span class="t" style="top:377.10px;left:215.00px;">Бухгалте...</span><svg class="a" style="left:197.30px;top:379.20px" width="8.8" height="8.8" viewBox="0 0 8.8 8.8"><rect x="0.4" y="0.4" width="8" height="8" fill="#eceff2" stroke="#a3afbb" stroke-width="0.75"/><ellipse cx="4.9" cy="4.6" rx="2.5" ry="2.1" fill="#efc43c"/><path d="M3 5.2c1 0.9 2.8 0.9 4 -0.2" stroke="#cf9f22" stroke-width="0.6" fill="none"/></svg><span class="t" style="top:377.10px;left:293.60px;">Вза...</span><svg class="a" style="left:275.50px;top:379.20px" width="8.8" height="8.8" viewBox="0 0 8.8 8.8"><rect x="0.4" y="0.4" width="8" height="8" fill="#eceff2" stroke="#a3afbb" stroke-width="0.75"/><ellipse cx="4.9" cy="4.6" rx="2.5" ry="2.1" fill="#efc43c"/><path d="M3 5.2c1 0.9 2.8 0.9 4 -0.2" stroke="#cf9f22" stroke-width="0.6" fill="none"/></svg><span class="t" style="top:377.10px;left:351.40px;">З..</span><svg class="a" style="left:333.70px;top:379.20px" width="8.8" height="8.8" viewBox="0 0 8.8 8.8"><rect x="0.4" y="0.4" width="8" height="8" fill="#eceff2" stroke="#a3afbb" stroke-width="0.75"/><ellipse cx="4.9" cy="4.6" rx="2.5" ry="2.1" fill="#efc43c"/><path d="M3 5.2c1 0.9 2.8 0.9 4 -0.2" stroke="#cf9f22" stroke-width="0.6" fill="none"/></svg><span class="t" style="top:377.10px;left:393.20px;">Исч...</span><svg class="a" style="left:375.10px;top:379.20px" width="8.8" height="8.8" viewBox="0 0 8.8 8.8"><rect x="0.4" y="0.4" width="8" height="8" fill="#eceff2" stroke="#a3afbb" stroke-width="0.75"/><ellipse cx="4.9" cy="4.6" rx="2.5" ry="2.1" fill="#efc43c"/><path d="M3 5.2c1 0.9 2.8 0.9 4 -0.2" stroke="#cf9f22" stroke-width="0.6" fill="none"/></svg><span class="t" style="top:377.10px;left:452.00px;">Начисл...</span><svg class="a" style="left:434.30px;top:379.20px" width="8.8" height="8.8" viewBox="0 0 8.8 8.8"><rect x="0.4" y="0.4" width="8" height="8" fill="#eceff2" stroke="#a3afbb" stroke-width="0.75"/><ellipse cx="4.9" cy="4.6" rx="2.5" ry="2.1" fill="#efc43c"/><path d="M3 5.2c1 0.9 2.8 0.9 4 -0.2" stroke="#cf9f22" stroke-width="0.6" fill="none"/></svg><span class="t" style="top:377.10px;left:521.60px;">Отраб...</span><svg class="a" style="left:503.50px;top:379.20px" width="8.8" height="8.8" viewBox="0 0 8.8 8.8"><rect x="0.4" y="0.4" width="8" height="8" fill="#eceff2" stroke="#a3afbb" stroke-width="0.75"/><ellipse cx="4.9" cy="4.6" rx="2.5" ry="2.1" fill="#efc43c"/><path d="M3 5.2c1 0.9 2.8 0.9 4 -0.2" stroke="#cf9f22" stroke-width="0.6" fill="none"/></svg><span class="t" style="top:377.10px;left:587.00px;">Расчеты на...</span><svg class="a" style="left:568.70px;top:379.20px" width="8.8" height="8.8" viewBox="0 0 8.8 8.8"><rect x="0.4" y="0.4" width="8" height="8" fill="#eceff2" stroke="#a3afbb" stroke-width="0.75"/><ellipse cx="4.9" cy="4.6" rx="2.5" ry="2.1" fill="#efc43c"/><path d="M3 5.2c1 0.9 2.8 0.9 4 -0.2" stroke="#cf9f22" stroke-width="0.6" fill="none"/></svg><span class="t" style="top:377.10px;left:672.60px;">Расчеты...</span><svg class="a" style="left:654.70px;top:379.20px" width="8.8" height="8.8" viewBox="0 0 8.8 8.8"><rect x="0.4" y="0.4" width="8" height="8" fill="#eceff2" stroke="#a3afbb" stroke-width="0.75"/><ellipse cx="4.9" cy="4.6" rx="2.5" ry="2.1" fill="#efc43c"/><path d="M3 5.2c1 0.9 2.8 0.9 4 -0.2" stroke="#cf9f22" stroke-width="0.6" fill="none"/></svg><span class="t" style="top:377.10px;left:746.60px;">Страхо...</span><svg class="a" style="left:728.70px;top:379.20px" width="8.8" height="8.8" viewBox="0 0 8.8 8.8"><rect x="0.4" y="0.4" width="8" height="8" fill="#eceff2" stroke="#a3afbb" stroke-width="0.75"/><ellipse cx="4.9" cy="4.6" rx="2.5" ry="2.1" fill="#efc43c"/><path d="M3 5.2c1 0.9 2.8 0.9 4 -0.2" stroke="#cf9f22" stroke-width="0.6" fill="none"/></svg><span class="t" style="top:377.10px;left:817.60px;">Учет ...</span><svg class="a" style="left:799.50px;top:379.20px" width="8.8" height="8.8" viewBox="0 0 8.8 8.8"><rect x="0.4" y="0.4" width="8" height="8" fill="#eceff2" stroke="#a3afbb" stroke-width="0.75"/><ellipse cx="4.9" cy="4.6" rx="2.5" ry="2.1" fill="#efc43c"/><path d="M3 5.2c1 0.9 2.8 0.9 4 -0.2" stroke="#cf9f22" stroke-width="0.6" fill="none"/></svg><span class="t" style="top:377.10px;left:882.40px;">Учет дохо...</span><svg class="a" style="left:864.50px;top:379.20px" width="8.8" height="8.8" viewBox="0 0 8.8 8.8"><rect x="0.4" y="0.4" width="8" height="8" fill="#eceff2" stroke="#a3afbb" stroke-width="0.75"/><ellipse cx="4.9" cy="4.6" rx="2.5" ry="2.1" fill="#efc43c"/><path d="M3 5.2c1 0.9 2.8 0.9 4 -0.2" stroke="#cf9f22" stroke-width="0.6" fill="none"/></svg><span class="t" style="top:377.10px;left:964.40px;">Докуме...</span><svg class="a" style="left:947.00px;top:379.60px" width="8.4" height="8.4" viewBox="0 0 8.4 8.4"><rect x="0.4" y="0.4" width="7.6" height="7.6" fill="#fff" stroke="#6f8f9f" stroke-width="0.7"/><path d="M0.4 2.6h7.6M0.4 4.5h7.6M0.4 6.3h7.6M3 0.4v7.6M5.6 0.4v7.6" stroke="#7fae86" stroke-width="0.55"/><rect x="0.6" y="0.6" width="7.2" height="1.7" fill="#5aa05e"/><rect x="3.3" y="4.8" width="2" height="1.3" fill="#5aa05e"/></svg><div class="a btn " style="left:959.80px;top:398.30px;width:36.80px;height:16.10px;"></div><span class="t" style="top:400.60px;left:968.00px;">Еще</span><svg class="a" style="left:988.60px;top:407.00px" width="4" height="2.4" viewBox="0 0 4 2.4"><path d="M0 0h4L2 2.3z" fill="#444"/></svg><div class="a" style="left:137.40px;top:420.40px;width:859.40px;height:346.00px;border:1px solid #c3c3c3;border-top-color:#adadad;box-sizing:border-box;background:#fff;"></div><div class="a" style="left:138.40px;top:421.40px;width:857.40px;height:19.20px;background:#f2f2f2;"></div><div class="a" style="left:194.60px;top:421.40px;width:0.80px;height:19.20px;background:#d9d9d9;"></div><div class="a" style="left:363.10px;top:421.40px;width:0.80px;height:19.20px;background:#d9d9d9;"></div><div class="a" style="left:531.60px;top:421.40px;width:0.80px;height:19.20px;background:#d9d9d9;"></div><div class="a" style="left:849.20px;top:421.40px;width:0.80px;height:19.20px;background:#d9d9d9;"></div><div class="a" style="left:922.20px;top:421.40px;width:0.80px;height:19.20px;background:#d9d9d9;"></div><span class="t" style="top:423.70px;left:143.40px;">Дата</span><span class="t" style="top:423.70px;left:200.60px;font-weight:700;">Дебет</span><span class="t" style="top:423.70px;left:369.00px;font-weight:700;">Кредит</span><span class="t" style="top:423.70px;left:537.60px;font-weight:700;">Сумма</span><span class="t" style="top:423.70px;left:855.00px;">Сумма НУ Дт</span><span class="t" style="top:423.70px;left:928.00px;">Сумма НУ Кт</span><div class="a" style="left:138.40px;top:440.40px;width:857.40px;height:53.80px;background:#fdf2cb;"></div><div class="a" style="left:194.60px;top:440.40px;width:0.80px;height:53.80px;background:#fff9e0;"></div><div class="a" style="left:363.10px;top:440.40px;width:0.80px;height:53.80px;background:#fff9e0;"></div><div class="a" style="left:531.60px;top:440.40px;width:0.80px;height:53.80px;background:#fff9e0;"></div><div class="a" style="left:849.20px;top:440.40px;width:0.80px;height:53.80px;background:#fff9e0;"></div><div class="a" style="left:922.20px;top:440.40px;width:0.80px;height:53.80px;background:#fff9e0;"></div><div class="a" style="left:195.00px;top:457.80px;width:654.60px;height:0.80px;background:#fff9e0;"></div><div class="a" style="left:363.50px;top:475.80px;width:168.50px;height:0.80px;background:#fff9e0;"></div><div class="a" style="left:241.40px;top:440.40px;width:0.80px;height:17.60px;background:#fff9e0;"></div><div class="a" style="left:275.00px;top:440.40px;width:0.80px;height:17.60px;background:#fff9e0;"></div><div class="a" style="left:410.00px;top:440.40px;width:0.80px;height:17.60px;background:#fff9e0;"></div><div class="a" style="left:444.00px;top:440.40px;width:0.80px;height:17.60px;background:#fff9e0;"></div><div class="a" style="left:138.40px;top:440.40px;width:56.60px;height:18.00px;background:#fbe28a;border:1px solid #efbf38;box-sizing:border-box;"></div><div class="a" style="left:138.40px;top:493.80px;width:857.40px;height:0.80px;background:#e9e9e9;"></div><div class="a" style="left:138.40px;top:548.00px;width:857.40px;height:0.80px;background:#e9e9e9;"></div><div class="a" style="left:138.40px;top:602.20px;width:857.40px;height:0.80px;background:#e9e9e9;"></div><div class="a" style="left:138.40px;top:656.60px;width:857.40px;height:0.80px;background:#e9e9e9;"></div><div class="a" style="left:138.40px;top:692.60px;width:857.40px;height:0.80px;background:#e9e9e9;"></div><div class="a" style="left:138.40px;top:728.60px;width:857.40px;height:0.80px;background:#e9e9e9;"></div><span class="t" style="top:443.00px;left:143.20px;">29.02.2024</span><span class="t" style="top:461.90px;left:190.20px;transform:translateX(-100%);">1</span><span class="t" style="top:443.00px;left:200.60px;color:#3a3a3a;font-weight:700;">26</span><span class="t" style="top:461.90px;left:200.60px;">Оплата труда</span><span class="t" style="top:443.00px;left:368.60px;color:#3a3a3a;font-weight:700;">70</span><span class="t" style="top:461.90px;left:368.60px;">Иванов Иван Иванович</span><span class="t" style="top:480.20px;left:368.60px;">пп.1, ст.255 НК РФ</span><span class="t" style="top:443.50px;left:844.80px;transform:translateX(-100%);color:#3a3a3a;font-weight:700;">150 000,00</span><span class="t" style="top:461.90px;left:537.60px;color:#4a4a4a;font-style:italic;">Начислена заработная плата</span><span class="t" style="top:443.50px;left:917.60px;transform:translateX(-100%);">150 000,00</span><span class="t" style="top:443.50px;left:991.00px;transform:translateX(-100%);">150 000,00</span><span class="t" style="top:497.90px;left:143.20px;">29.02.2024</span><span class="t" style="top:515.70px;left:190.20px;transform:translateX(-100%);">2</span><span class="t" style="top:497.90px;left:200.60px;color:#3a3a3a;font-weight:700;">26</span><span class="t" style="top:515.70px;left:200.60px;">Оплата труда</span><span class="t" style="top:497.90px;left:368.60px;color:#3a3a3a;font-weight:700;">70</span><span class="t" style="top:515.70px;left:368.60px;">Петров Петр Петрович</span><span class="t" style="top:534.00px;left:368.60px;">пп.1, ст.255 НК РФ</span><span class="t" style="top:497.30px;left:844.80px;transform:translateX(-100%);color:#3a3a3a;font-weight:700;">100 000,00</span><span class="t" style="top:515.70px;left:537.60px;color:#4a4a4a;font-style:italic;">Начислена заработная плата</span><span class="t" style="top:497.30px;left:917.60px;transform:translateX(-100%);">100 000,00</span><span class="t" style="top:497.30px;left:991.00px;transform:translateX(-100%);">100 000,00</span><span class="t" style="top:551.50px;left:143.20px;">29.02.2024</span><span class="t" style="top:569.90px;left:190.20px;transform:translateX(-100%);">3</span><span class="t" style="top:551.50px;left:200.60px;color:#3a3a3a;font-weight:700;">70</span><span class="t" style="top:569.90px;left:200.60px;">Иванов Иван Иванович</span><span class="t" style="top:588.20px;left:200.60px;color:#a8a8a8;">&lt;...&gt;</span><span class="t" style="top:551.50px;left:368.60px;color:#3a3a3a;font-weight:700;">68.01.1</span><span class="t" style="top:569.90px;left:368.60px;">Налог (взносы): начислено / уплачено</span><span class="t" style="top:551.50px;left:844.80px;transform:translateX(-100%);color:#3a3a3a;font-weight:700;">19 500,00</span><span class="t" style="top:569.90px;left:537.60px;color:#4a4a4a;font-style:italic;">Удержан НДФЛ</span><span class="t" style="top:551.50px;left:917.60px;transform:translateX(-100%);">19 500,00</span><span class="t" style="top:605.70px;left:143.20px;">29.02.2024</span><span class="t" style="top:624.10px;left:190.20px;transform:translateX(-100%);">4</span><span class="t" style="top:605.70px;left:200.60px;color:#3a3a3a;font-weight:700;">70</span><span class="t" style="top:624.10px;left:200.60px;">Петров Петр Петрович</span><span class="t" style="top:642.40px;left:200.60px;color:#a8a8a8;">&lt;...&gt;</span><span class="t" style="top:605.70px;left:368.60px;color:#3a3a3a;font-weight:700;">68.01.1</span><span class="t" style="top:624.10px;left:368.60px;">Налог (взносы): начислено / уплачено</span><span class="t" style="top:605.70px;left:844.80px;transform:translateX(-100%);color:#3a3a3a;font-weight:700;">13 000,00</span><span class="t" style="top:624.10px;left:537.60px;color:#4a4a4a;font-style:italic;">Удержан НДФЛ</span><span class="t" style="top:605.70px;left:917.60px;transform:translateX(-100%);">13 000,00</span><span class="t" style="top:660.10px;left:143.20px;">29.02.2024</span><span class="t" style="top:678.50px;left:190.20px;transform:translateX(-100%);">5</span><span class="t" style="top:660.10px;left:200.60px;color:#3a3a3a;font-weight:700;">26</span><span class="t" style="top:678.50px;left:200.60px;">Взносы в ФСС от НС и ПЗ</span><span class="t" style="top:660.10px;left:368.60px;color:#3a3a3a;font-weight:700;">69.11</span><span class="t" style="top:678.50px;left:368.60px;">Налог (взносы): начислено / уплачено</span><span class="t" style="top:660.10px;left:844.80px;transform:translateX(-100%);color:#3a3a3a;font-weight:700;">500,00</span><span class="t" style="top:678.50px;left:537.60px;color:#4a4a4a;font-style:italic;">Расчеты по обязательному социальному страхованию от НС и ПЗ</span><span class="t" style="top:660.10px;left:917.60px;transform:translateX(-100%);">500,00</span><span class="t" style="top:696.10px;left:143.20px;">29.02.2024</span><span class="t" style="top:714.50px;left:190.20px;transform:translateX(-100%);">6</span><span class="t" style="top:696.10px;left:200.60px;color:#3a3a3a;font-weight:700;">26</span><span class="t" style="top:714.50px;left:200.60px;">Страховые взносы</span><span class="t" style="top:696.10px;left:368.60px;color:#3a3a3a;font-weight:700;">69.09</span><span class="t" style="top:714.50px;left:368.60px;">Налог (взносы): начислено / уплачено</span><span class="t" style="top:696.10px;left:844.80px;transform:translateX(-100%);color:#3a3a3a;font-weight:700;">75 000,00</span><span class="t" style="top:714.50px;left:537.60px;color:#4a4a4a;font-style:italic;">Страховые взносы (единый тариф)</span><span class="t" style="top:696.10px;left:917.60px;transform:translateX(-100%);">75 000,00</span><span class="t" style="top:732.10px;left:143.20px;">28.03.2024</span><span class="t" style="top:750.50px;left:190.20px;transform:translateX(-100%);">7</span><span class="t" style="top:732.10px;left:200.60px;color:#3a3a3a;font-weight:700;">69.09</span><span class="t" style="top:750.50px;left:200.60px;">Налог (взносы): начислено / уплачено</span><span class="t" style="top:732.10px;left:368.60px;color:#3a3a3a;font-weight:700;">68.90</span><span class="t" style="top:732.10px;left:844.80px;transform:translateX(-100%);color:#3a3a3a;font-weight:700;">75 000,00</span><span class="t" style="top:750.50px;left:537.60px;color:#4a4a4a;font-style:italic;">Учет страховых взносов в составе совокупной налоговой обязанности</span>
<svg class="a" style="left:0;top:0" width="1024" height="781" viewBox="0 0 1024 781"><path d="M693.4 201.3L729.4 171.8V183.2H859.4V218.8H729.4V230.3z" fill="#fff" stroke="#f8444a" stroke-width="1.7" stroke-linejoin="miter"/><path d="M858.9 182.4V219.6" stroke="#f8444a" stroke-width="2.5"/><path d="M729 218.5H860" stroke="#f8444a" stroke-width="2.3"/><rect x="615.2" y="182.6" width="72.20" height="37.80" fill="none" stroke="#f8444a" stroke-width="1.5"/><rect x="109.3" y="225.9" width="98.40" height="17.10" fill="none" stroke="#f8444a" stroke-width="1.45"/><path d="M653.60 220.60L821.77 686.72" stroke="#f8444a" stroke-width="1.2" fill="none"/><path d="M823.60 691.80L819.51 687.53L824.02 685.91z" fill="#f8444a"/><rect x="365.4" y="694.6" width="629.40" height="17.40" fill="none" stroke="#f8444a" stroke-width="1.25"/><rect x="138.2" y="729" width="856.60" height="36.60" fill="none" stroke="#f8444a" stroke-width="1.25"/><path d="M365.20 704.00L235.83 736.87" stroke="#f8444a" stroke-width="1.2" fill="none"/><path d="M230.60 738.20L235.24 734.54L236.42 739.20z" fill="#f8444a"/></svg><span class="t" style="top:191.50px;left:791.60px;transform:translateX(-50%);font-size:8.26px;color:#303030;">В т.ч. взносы на страхование по</span><span class="t" style="top:201.90px;left:790.80px;transform:translateX(-50%);font-size:8.26px;color:#303030;">единому тарифу 75 000,00 руб.</span>
</body></html>
